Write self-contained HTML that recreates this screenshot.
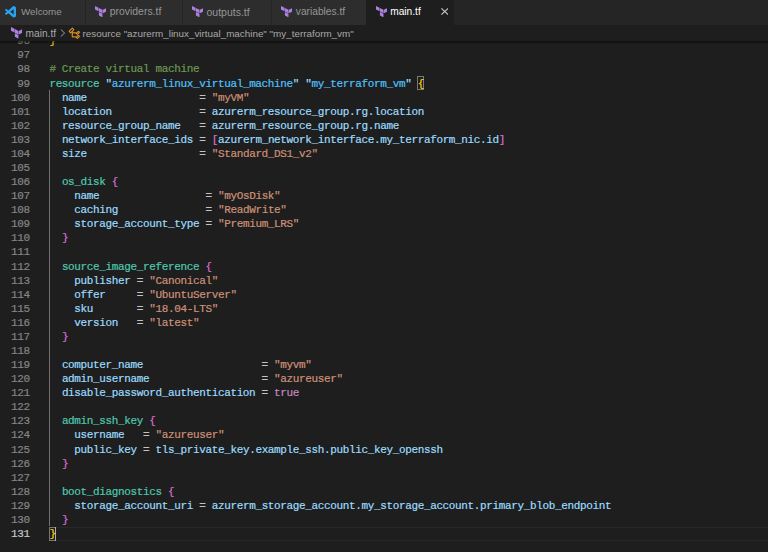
<!DOCTYPE html>
<html><head><meta charset="utf-8">
<style>
*{margin:0;padding:0;box-sizing:border-box}
html,body{width:768px;height:552px;overflow:hidden;background:#1e1e1e}
body{position:relative;font-family:"Liberation Sans",sans-serif}
#tabs{position:absolute;left:0;top:0;width:768px;height:24.5px;background:#252526}
.tab{position:absolute;top:0;height:24.5px;background:#2d2d2d;color:#969696;white-space:nowrap}
.tab.active{background:#1e1e1e;color:#ffffff}
.tab svg,.tab span{position:absolute}
.tab span{top:6.2px;line-height:12px;font-size:10.2px}
#crumbs{position:absolute;left:0;top:24.5px;width:768px;height:16.2px;background:#1e1e1e;color:#a9a9a9;white-space:nowrap}
#crumbs span{position:absolute;top:3.1px;line-height:12px;font-size:10.2px}
#crumbs svg{position:absolute}
#shadow{position:absolute;left:0;top:40.7px;width:768px;height:4px;background:linear-gradient(rgba(0,0,0,0.55),rgba(0,0,0,0.12) 60%,rgba(0,0,0,0));z-index:5}
#nums{position:absolute;left:0;top:34.3px;width:29.7px;text-align:right;color:#858585;font-family:"Liberation Mono",monospace;font-size:11px;letter-spacing:-0.36px;-webkit-text-stroke-width:0.2px;line-height:14.085px;white-space:pre}
#nums .cn{color:#c6c6c6}
#code{position:absolute;left:49.4px;top:34.3px;width:720px;font-family:"Liberation Mono",monospace;font-size:11px;letter-spacing:-0.36px;-webkit-text-stroke-width:0.2px;line-height:14.085px;white-space:pre;color:#d4d4d4}
.bm{color:#ffd700}
#curline{position:absolute;left:49px;top:526.7px;width:719px;height:14.1px;border-top:1px solid #282828;border-bottom:1px solid #282828}
#clip{position:absolute;left:0;top:40.7px;width:768px;height:512px;overflow:hidden}
.guide{position:absolute;width:1px;background:#404040}
</style></head><body>
<svg width="0" height="0" style="position:absolute">
 <defs>
  <symbol id="tf" viewBox="1.44 0 21.12 24" preserveAspectRatio="none">
   <path fill="#ad80e0" d="M1.44 0v7.575l6.561 3.79V3.787zm21.12 4.227l-6.561 3.791v7.574l6.56-3.787zM8.72 4.23v7.575l6.561 3.787V8.018zm0 8.405v7.575L15.28 24v-7.578z"/>
  </symbol>
 </defs>
</svg>
<div id="tabs">
  <div class="tab" style="left:0;width:85px">
    <svg style="left:4.6px;top:6px" width="11.6" height="11.6" viewBox="0 0 100 100"><path fill="#29a2ef" d="M96.46 10.8L75.86.87a6.23 6.23 0 0 0-7.1 1.2L29.33 38.04 12.16 25.01a4.160 4.16 0 0 0-5.32.24L1.33 30.260a4.16 4.16 0 0 0 0 6.16L16.22 50 1.33 63.58a4.16 4.16 0 0 0 0 6.16l5.5 5.01a4.16 4.16 0 0 0 5.32.24l17.170-13.03 39.43 35.97a6.23 6.23 0 0 0 7.1 1.2l20.6-9.91A6.25 6.25 0 0 0 100 83.6V16.4a6.25 6.25 0 0 0-3.54-5.6zM75.01 72.7 45.1 50l29.9-22.7v45.4z"/></svg>
    <span style="left:21px;font-size:9.8px">Welcome</span>
  </div>
  <div class="tab" style="left:86px;width:95.5px">
    <svg style="left:8.8px;top:5.5px" width="11.4" height="11.3"><use href="#tf"/></svg>
    <span style="left:23.7px;font-size:10.45px">providers.tf</span>
  </div>
  <div class="tab" style="left:182.5px;width:88.5px">
    <svg style="left:9px;top:5.5px" width="11.4" height="11.3"><use href="#tf"/></svg>
    <span style="left:24px;font-size:10.5px">outputs.tf</span>
  </div>
  <div class="tab" style="left:272px;width:93.5px">
    <svg style="left:8.8px;top:5.5px" width="11.4" height="11.3"><use href="#tf"/></svg>
    <span style="left:23.8px">variables.tf</span>
  </div>
  <div class="tab active" style="left:366px;width:88px">
    <svg style="left:9.6px;top:5.5px" width="11.4" height="11.3"><use href="#tf"/></svg>
    <span style="left:24.2px">main.tf</span>
    <svg style="left:74.7px;top:8.2px" width="7.6" height="7" viewBox="0 0 7.6 7"><path d="M0.4 0.4L7.2 6.6M7.2 0.4L0.4 6.6" stroke="#cccccc" stroke-width="1.1"/></svg>
  </div>
</div>
<div id="crumbs">
  <svg style="left:10.5px;top:2.8px" width="11.3" height="11.7"><use href="#tf"/></svg>
  <span style="left:25.5px">main.tf</span>
  <svg style="left:60px;top:4.5px" width="6" height="8" viewBox="0 0 6 8"><path d="M0.8 0.5L4.6 4L0.8 7.5" fill="none" stroke="#a0a0a0" stroke-width="1"/></svg>
  <svg style="left:68.2px;top:2px" width="12.8" height="12.8" viewBox="0 0 16 16"><path fill="#ee9d28" stroke="#ee9d28" stroke-width="0.35" d="M11.34 9.71h.71l2.67-2.670v-.71L13.38 5h-.7l-1.82 1.81h-5V5.56l1.86-1.85V3l-2-2H5L1 5v.71l2 2h.71l1.14-1.15v5.79l.5.5H10v.52l1.33 1.34h.71l2.67-2.67v-.71L13.37 10h-.7l-1.86 1.85h-5v-4H10v.48l1.34 1.38zm1.69-3.650l.63.63-2 2-.63-.63 2-2zm0 5l.63.63-2 2-.63-.63 2-2zM3.35 6.65l-1.290-1.3 3.29-3.29 1.3 1.29-3.3 3.3z"/></svg>
  <span style="left:82.6px;font-size:9.85px">resource "azurerm_linux_virtual_machine" "my_terraform_vm"</span>
</div>
<div id="shadow"></div>
<div id="clip">
<div style="position:absolute;left:0;top:-40.7px;width:768px;height:552px">
<div id="curline"></div>
<div class="guide" style="left:49px;top:90.2px;height:435.8px;background:#707070"></div>
<div style="position:absolute;left:417.2px;top:76px;width:6.4px;height:14px;border:1px solid #777"></div>
<div style="position:absolute;left:49px;top:526.8px;width:6.6px;height:14.1px;border:1px solid #777"></div>
<div style="position:absolute;left:55px;top:526.8px;width:1.4px;height:14.1px;background:#aeafad"></div>
<div id="nums"><div>96</div><div>97</div><div>98</div><div>99</div><div>100</div><div>101</div><div>102</div><div>103</div><div>104</div><div>105</div><div>106</div><div>107</div><div>108</div><div>109</div><div>110</div><div>111</div><div>112</div><div>113</div><div>114</div><div>115</div><div>116</div><div>117</div><div>118</div><div>119</div><div>120</div><div>121</div><div>122</div><div>123</div><div>124</div><div>125</div><div>126</div><div>127</div><div>128</div><div>129</div><div>130</div><div class="cn">131</div></div>
<div id="code"><div class="ln"><span style="color:#ffd700">}</span></div><div class="ln">&nbsp;</div><div class="ln"><span style="color:#6a9955"># Create virtual machine</span></div><div class="ln"><span style="color:#4ec9b0">resource</span> <span style="color:#9cdcfe">&quot;</span><span style="color:#4fc1ff">azurerm_linux_virtual_machine</span><span style="color:#9cdcfe">&quot;</span> <span style="color:#9cdcfe">&quot;</span><span style="color:#4fc1ff">my_terraform_vm</span><span style="color:#9cdcfe">&quot;</span> <span class="bm">{</span></div><div class="ln">  <span style="color:#9cdcfe">name</span>                  <span style="color:#c4c4c4">=</span> <span style="color:#ce9178">&quot;myVM&quot;</span></div><div class="ln">  <span style="color:#9cdcfe">location</span>              <span style="color:#c4c4c4">=</span> <span style="color:#9cdcfe">azurerm_resource_group.rg.location</span></div><div class="ln">  <span style="color:#9cdcfe">resource_group_name</span>   <span style="color:#c4c4c4">=</span> <span style="color:#9cdcfe">azurerm_resource_group.rg.name</span></div><div class="ln">  <span style="color:#9cdcfe">network_interface_ids</span> <span style="color:#c4c4c4">=</span> <span style="color:#da70d6">[</span><span style="color:#9cdcfe">azurerm_network_interface.my_terraform_nic.id</span><span style="color:#da70d6">]</span></div><div class="ln">  <span style="color:#9cdcfe">size</span>                  <span style="color:#c4c4c4">=</span> <span style="color:#ce9178">&quot;Standard_DS1_v2&quot;</span></div><div class="ln">&nbsp;</div><div class="ln">  <span style="color:#4ec9b0">os_disk</span> <span style="color:#da70d6">{</span></div><div class="ln">    <span style="color:#9cdcfe">name</span>                 <span style="color:#c4c4c4">=</span> <span style="color:#ce9178">&quot;myOsDisk&quot;</span></div><div class="ln">    <span style="color:#9cdcfe">caching</span>              <span style="color:#c4c4c4">=</span> <span style="color:#ce9178">&quot;ReadWrite&quot;</span></div><div class="ln">    <span style="color:#9cdcfe">storage_account_type</span> <span style="color:#c4c4c4">=</span> <span style="color:#ce9178">&quot;Premium_LRS&quot;</span></div><div class="ln">  <span style="color:#da70d6">}</span></div><div class="ln">&nbsp;</div><div class="ln">  <span style="color:#4ec9b0">source_image_reference</span> <span style="color:#da70d6">{</span></div><div class="ln">    <span style="color:#9cdcfe">publisher</span> <span style="color:#c4c4c4">=</span> <span style="color:#ce9178">&quot;Canonical&quot;</span></div><div class="ln">    <span style="color:#9cdcfe">offer</span>     <span style="color:#c4c4c4">=</span> <span style="color:#ce9178">&quot;UbuntuServer&quot;</span></div><div class="ln">    <span style="color:#9cdcfe">sku</span>       <span style="color:#c4c4c4">=</span> <span style="color:#ce9178">&quot;18.04-LTS&quot;</span></div><div class="ln">    <span style="color:#9cdcfe">version</span>   <span style="color:#c4c4c4">=</span> <span style="color:#ce9178">&quot;latest&quot;</span></div><div class="ln">  <span style="color:#da70d6">}</span></div><div class="ln">&nbsp;</div><div class="ln">  <span style="color:#9cdcfe">computer_name</span>                   <span style="color:#c4c4c4">=</span> <span style="color:#ce9178">&quot;myvm&quot;</span></div><div class="ln">  <span style="color:#9cdcfe">admin_username</span>                  <span style="color:#c4c4c4">=</span> <span style="color:#ce9178">&quot;azureuser&quot;</span></div><div class="ln">  <span style="color:#9cdcfe">disable_password_authentication</span> <span style="color:#c4c4c4">=</span> <span style="color:#c586c0">true</span></div><div class="ln">&nbsp;</div><div class="ln">  <span style="color:#4ec9b0">admin_ssh_key</span> <span style="color:#da70d6">{</span></div><div class="ln">    <span style="color:#9cdcfe">username</span>   <span style="color:#c4c4c4">=</span> <span style="color:#ce9178">&quot;azureuser&quot;</span></div><div class="ln">    <span style="color:#9cdcfe">public_key</span> <span style="color:#c4c4c4">=</span> <span style="color:#9cdcfe">tls_private_key.example_ssh.public_key_openssh</span></div><div class="ln">  <span style="color:#da70d6">}</span></div><div class="ln">&nbsp;</div><div class="ln">  <span style="color:#4ec9b0">boot_diagnostics</span> <span style="color:#da70d6">{</span></div><div class="ln">    <span style="color:#9cdcfe">storage_account_uri</span> <span style="color:#c4c4c4">=</span> <span style="color:#9cdcfe">azurerm_storage_account.my_storage_account.primary_blob_endpoint</span></div><div class="ln">  <span style="color:#da70d6">}</span></div><div class="ln cur"><span class="bm">}</span></div></div>
</div>
</div>
</body></html>
